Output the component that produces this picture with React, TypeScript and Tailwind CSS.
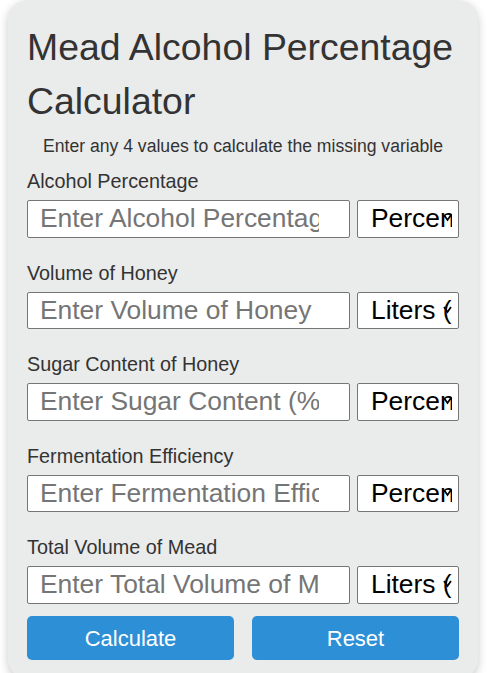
import React from 'react'

const FIELDS = [
  { label: 'Alcohol Percentage', placeholder: 'Enter Alcohol Percentage (%)', unit: 'Percentage (%)' },
  { label: 'Volume of Honey', placeholder: 'Enter Volume of Honey (L)', unit: 'Liters (L)' },
  { label: 'Sugar Content of Honey', placeholder: 'Enter Sugar Content (%)', unit: 'Percentage (%)' },
  { label: 'Fermentation Efficiency', placeholder: 'Enter Fermentation Efficiency (%)', unit: 'Percentage (%)' },
  { label: 'Total Volume of Mead', placeholder: 'Enter Total Volume of Mead (L)', unit: 'Liters (L)' },
]

function UnitSelect({ unit }: { unit: string }) {
  return (
    <div className="relative w-[102px] min-w-0 shrink-0 h-full bg-white border border-[#767676] rounded-[2px] overflow-hidden">
      <div className="h-full ml-[13px] mr-[6px] overflow-hidden whitespace-nowrap text-[26.4px] leading-[35.5px] text-black">
        {unit}
      </div>
      {/* dropdown arrow */}
      <svg className="absolute right-[6px] top-[12px]" width="9" height="10" viewBox="0 0 9 10">
        <path d="M1 2 L4.5 7 L8 2" fill="none" stroke="#000" strokeWidth="1.8" />
      </svg>
    </div>
  )
}

export default function App() {
  return (
    <div className="min-h-screen bg-white font-['Liberation_Sans',Arial,sans-serif]">
      <div className="ml-[8px] w-[470px] rounded-[20px] bg-[#eaebeb] px-[19px] pt-[20px] pb-[19px] shadow-[0_3px_10px_rgba(0,0,0,0.22)]">
        <h1 className="text-[37.4px] leading-[54px] font-normal text-[#333]">Mead Alcohol Percentage Calculator</h1>
        <p className="mt-[8px] text-center text-[17.6px] leading-[20px] text-[#333]">
          Enter any 4 values to calculate the missing variable
        </p>

        {FIELDS.map((f, i) => (
          <div key={f.label} className={i === 0 ? 'mt-[14px]' : 'mt-[24px]'}>
            <label className="block text-[19.8px] leading-[23px] text-[#333]">{f.label}</label>
            <div className="mt-[7px] flex gap-[7px] h-[37.5px]">
              <input
                type="text"
                placeholder={f.placeholder}
                className="w-[323px] min-w-0 shrink-0 h-full bg-white border border-[#767676] rounded-[2px] pl-[12px] pr-[30px] text-[26.4px] text-black placeholder:text-[#757575] outline-none"
              />
              <UnitSelect unit={f.unit} />
            </div>
          </div>
        ))}

        <div className="mt-[12.5px] flex gap-[18px]">
          <button className="flex-1 h-[44px] rounded-[5px] bg-[#2d8fd6] text-white text-[22px]">Calculate</button>
          <button className="flex-1 h-[44px] rounded-[5px] bg-[#2d8fd6] text-white text-[22px]">Reset</button>
        </div>
      </div>
    </div>
  )
}
